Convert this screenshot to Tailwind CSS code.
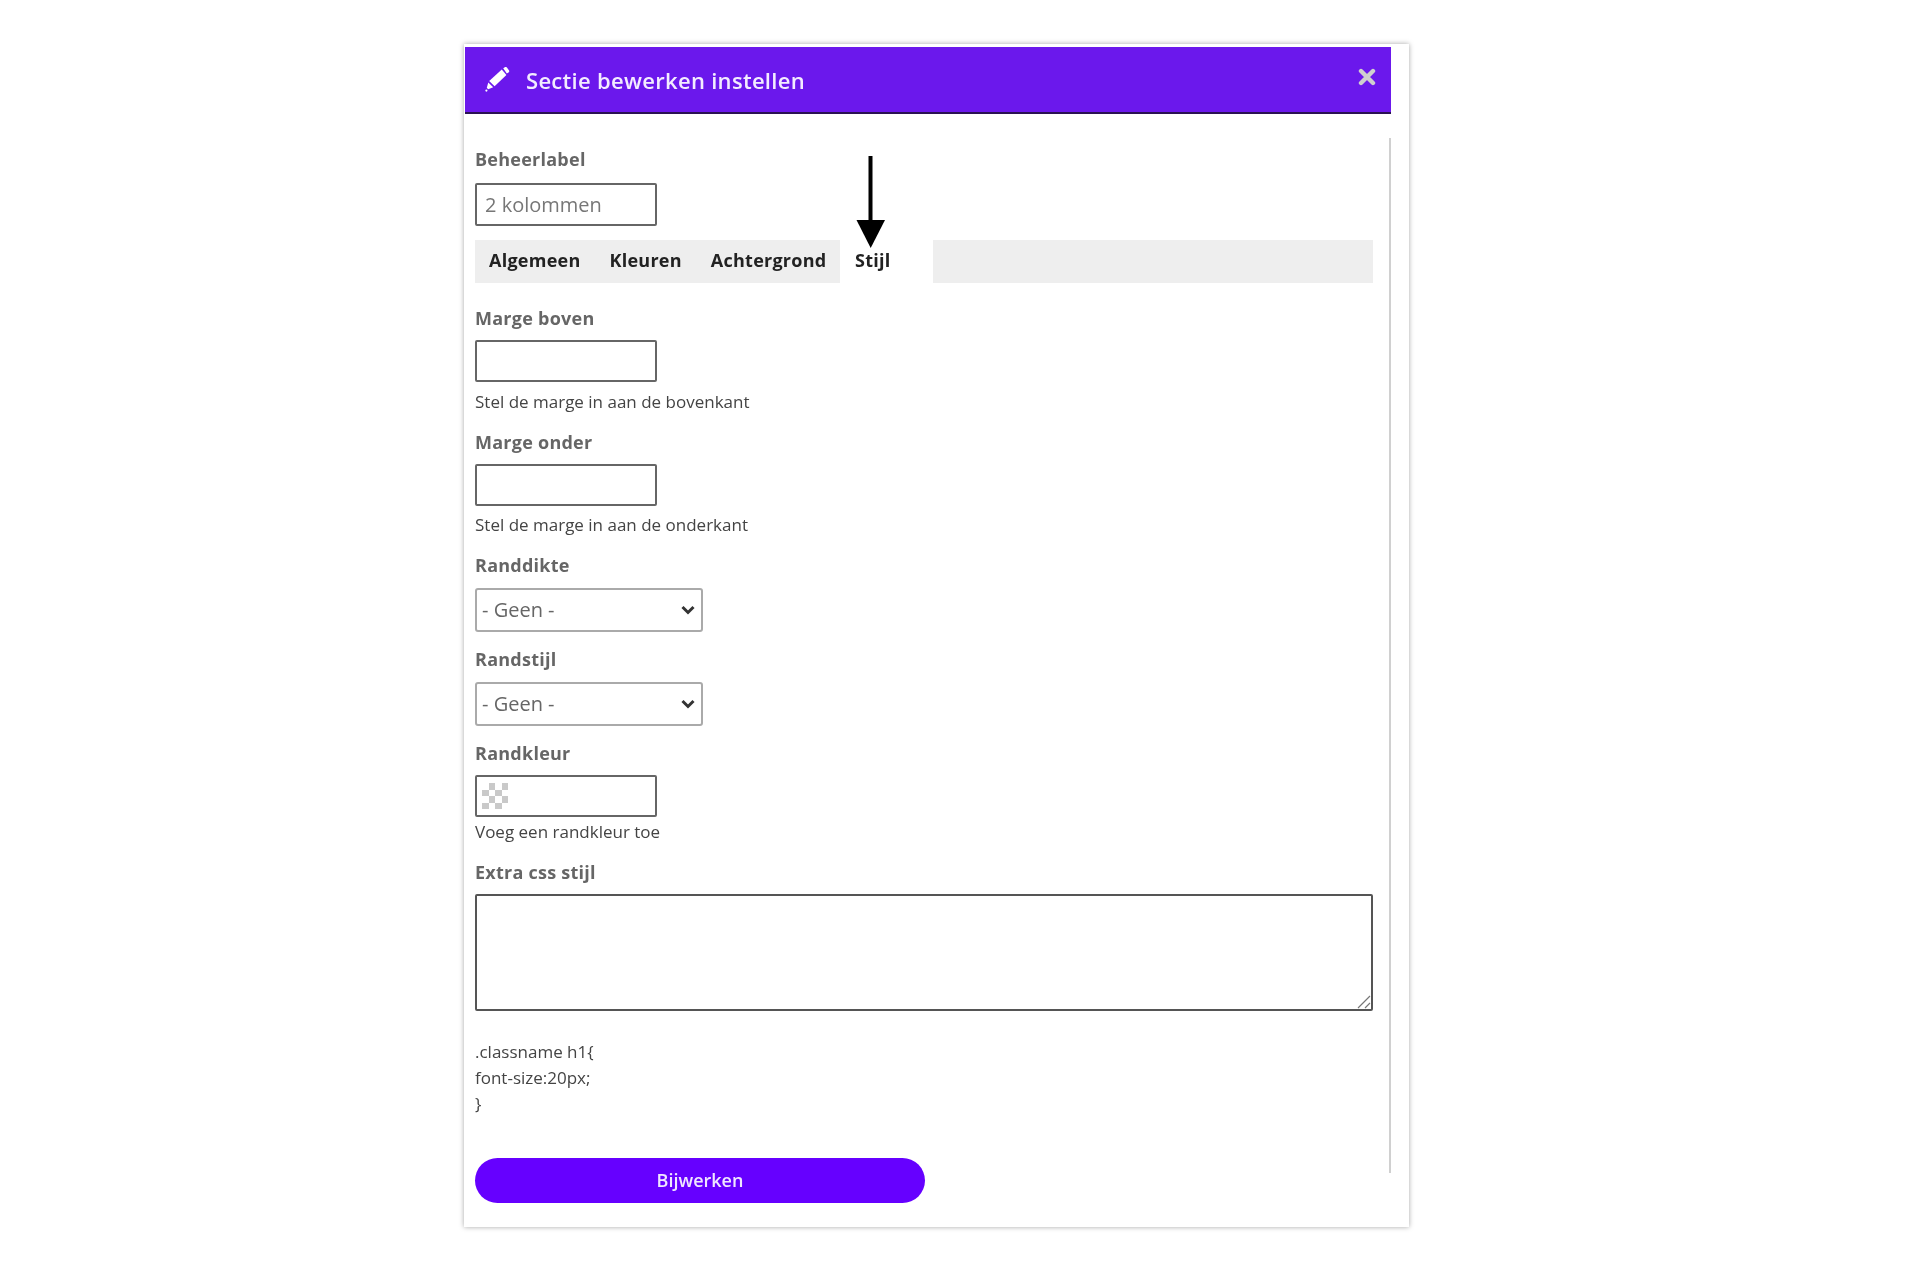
<!DOCTYPE html>
<html lang="nl">
  <head>
    <title>Sectie bewerken instellen</title>
    <meta charset="UTF-8" />
    <script src="https://cdn.jsdelivr.net/npm/@tailwindcss/browser@4"></script>
  </head>
  <body class="bg-white font-['Open_Sans',sans-serif] h-[1280px] overflow-hidden">
    <div class="ml-[464px] mt-[44px] w-[945px] h-[1183px] bg-white pt-[3px] pl-px shadow-[0_0_5px_rgba(0,0,0,0.35)] relative blur-[0.5px]">
      <!-- header -->
      <div class="w-[926px] h-[67px] bg-[#6b18ec] border-b-2 border-[#2a1253] flex items-center pl-[20px] text-white relative">
        <svg class="w-[25px] h-[25px] mr-[16px]" viewBox="0 0 25 25" fill="#fff">
          <path d="M18.2 1.2l1.6-1a1.6 1.6 0 0 1 2.1.4l2 2.6a1.6 1.6 0 0 1-.4 2.2l-1.7 1.2z" />
          <path d="M16.8 2.4l4.6 5.5L9.6 19.3 4.2 14z" />
          <path d="M3.3 15.4l4.9 4.9-5 1.9-1.4-1.4z" />
          <circle cx="1.4" cy="23.6" r="1.1" />
        </svg>
        <h1 class="text-[22px] leading-none font-semibold tracking-[0.3px] text-[#f3ecff]">Sectie bewerken instellen</h1>
        <svg class="absolute right-[15px] top-[21px] w-[18px] h-[18px]" viewBox="0 0 18 18" stroke="#cfcfcf" stroke-width="4.4" stroke-linecap="round">
          <path d="M3 3l12 12M15 3L3 15" />
        </svg>
      </div>

      <!-- form, right border is the scrollbar track -->
      <div class="mt-[24px] w-[926px] h-[1035px] border-r-2 border-[#d0d0d0] pl-[10px] text-[#444]">
        <label class="block text-[18px] tracking-[0.25px] leading-[22px] font-bold text-[#666] pt-[10px]">Beheerlabel</label>
        <div class="mt-[13px] w-[182px] h-[43px] border-2 border-[#666] rounded-[2px] pl-[8px] flex items-center text-[20px] text-[#777]">2 kolommen</div>

        <div class="mt-[14px] w-[898px] h-[43px] flex text-[18px] tracking-[0.25px] font-bold text-[#222]">
          <div class="w-[365px] bg-[#eeeeee] flex items-center pl-[14px] pb-[2px] gap-[29px]">
            <span>Algemeen</span>
            <span>Kleuren</span>
            <span>Achtergrond</span>
          </div>
          <div class="w-[93px] flex items-center pl-[15px] pb-[2px] relative">
            <span>Stijl</span>
            <svg class="absolute left-[16px] top-[-84px] w-[30px] h-[95px]" viewBox="0 0 30 95" fill="#000">
              <rect x="12.5" y="0" width="4" height="66" />
              <path d="M0.5 64h28.5L14.7 92z" />
            </svg>
          </div>
          <div class="flex-1 bg-[#eeeeee]"></div>
        </div>

        <label class="block mt-[24px] text-[18px] tracking-[0.25px] leading-[22px] font-bold text-[#666]">Marge boven</label>
        <div class="mt-[11px] w-[182px] h-[42px] border-2 border-[#666] rounded-[2px]"></div>
        <p class="mt-[10px] text-[17px] leading-[20px]">Stel de marge in aan de bovenkant</p>

        <label class="block mt-[19px] text-[18px] tracking-[0.25px] leading-[22px] font-bold text-[#666]">Marge onder</label>
        <div class="mt-[11px] w-[182px] h-[42px] border-2 border-[#666] rounded-[2px]"></div>
        <p class="mt-[9px] text-[17px] leading-[20px]">Stel de marge in aan de onderkant</p>

        <label class="block mt-[19px] text-[18px] tracking-[0.25px] leading-[22px] font-bold text-[#666]">Randdikte</label>
        <div class="mt-[12px] w-[228px] h-[44px] border-2 border-[#aaa] rounded-[3px] flex items-center justify-between pl-[5px] pr-[6px] text-[20px] text-[#666]">
          <span>- Geen -</span>
          <svg class="w-[14px] h-[10px]" viewBox="0 0 14 10" fill="none" stroke="#333" stroke-width="3"><path d="M1.5 2l5.5 5.5L12.5 2" /></svg>
        </div>

        <label class="block mt-[16px] text-[18px] tracking-[0.25px] leading-[22px] font-bold text-[#666]">Randstijl</label>
        <div class="mt-[12px] w-[228px] h-[44px] border-2 border-[#aaa] rounded-[3px] flex items-center justify-between pl-[5px] pr-[6px] text-[20px] text-[#666]">
          <span>- Geen -</span>
          <svg class="w-[14px] h-[10px]" viewBox="0 0 14 10" fill="none" stroke="#333" stroke-width="3"><path d="M1.5 2l5.5 5.5L12.5 2" /></svg>
        </div>

        <label class="block mt-[16px] text-[18px] tracking-[0.25px] leading-[22px] font-bold text-[#666]">Randkleur</label>
        <div class="mt-[11px] w-[182px] h-[42px] border-2 border-[#666] rounded-[2px] pl-[5px] pt-[6px]">
          <svg class="w-[26px] h-[26px]" viewBox="0 0 4 4" fill="#c9c9c9" shape-rendering="crispEdges">
            <path d="M1 0h1v1H1zM3 0h1v1H3zM0 1h1v1H0zM2 1h1v1H2zM1 2h1v1H1zM3 2h1v1H3zM0 3h1v1H0zM2 3h1v1H2z" />
          </svg>
        </div>
        <p class="mt-[5px] text-[17px] leading-[20px]">Voeg een randkleur toe</p>

        <label class="block mt-[19px] text-[18px] tracking-[0.25px] leading-[22px] font-bold text-[#666]">Extra css stijl</label>
        <div class="mt-[11px] w-[898px] h-[117px] border-2 border-[#555] rounded-[2px] relative">
          <svg class="absolute right-0 bottom-0 w-[14px] h-[14px]" viewBox="0 0 14 14" stroke="#777" stroke-width="1.2">
            <path d="M1 13L13 1M8 13l5-5" />
          </svg>
        </div>
        <div class="mt-[28px] text-[17px] leading-[26px]">
          <p>.classname h1{</p>
          <p>font-size:20px;</p>
          <p>}</p>
        </div>
        <button class="mt-[41px] w-[450px] h-[45px] rounded-full bg-[#6600ff] text-[#f0e6ff] text-[18px] font-semibold flex items-center justify-center">Bijwerken</button>
      </div>
    </div>
  </body>
</html>
